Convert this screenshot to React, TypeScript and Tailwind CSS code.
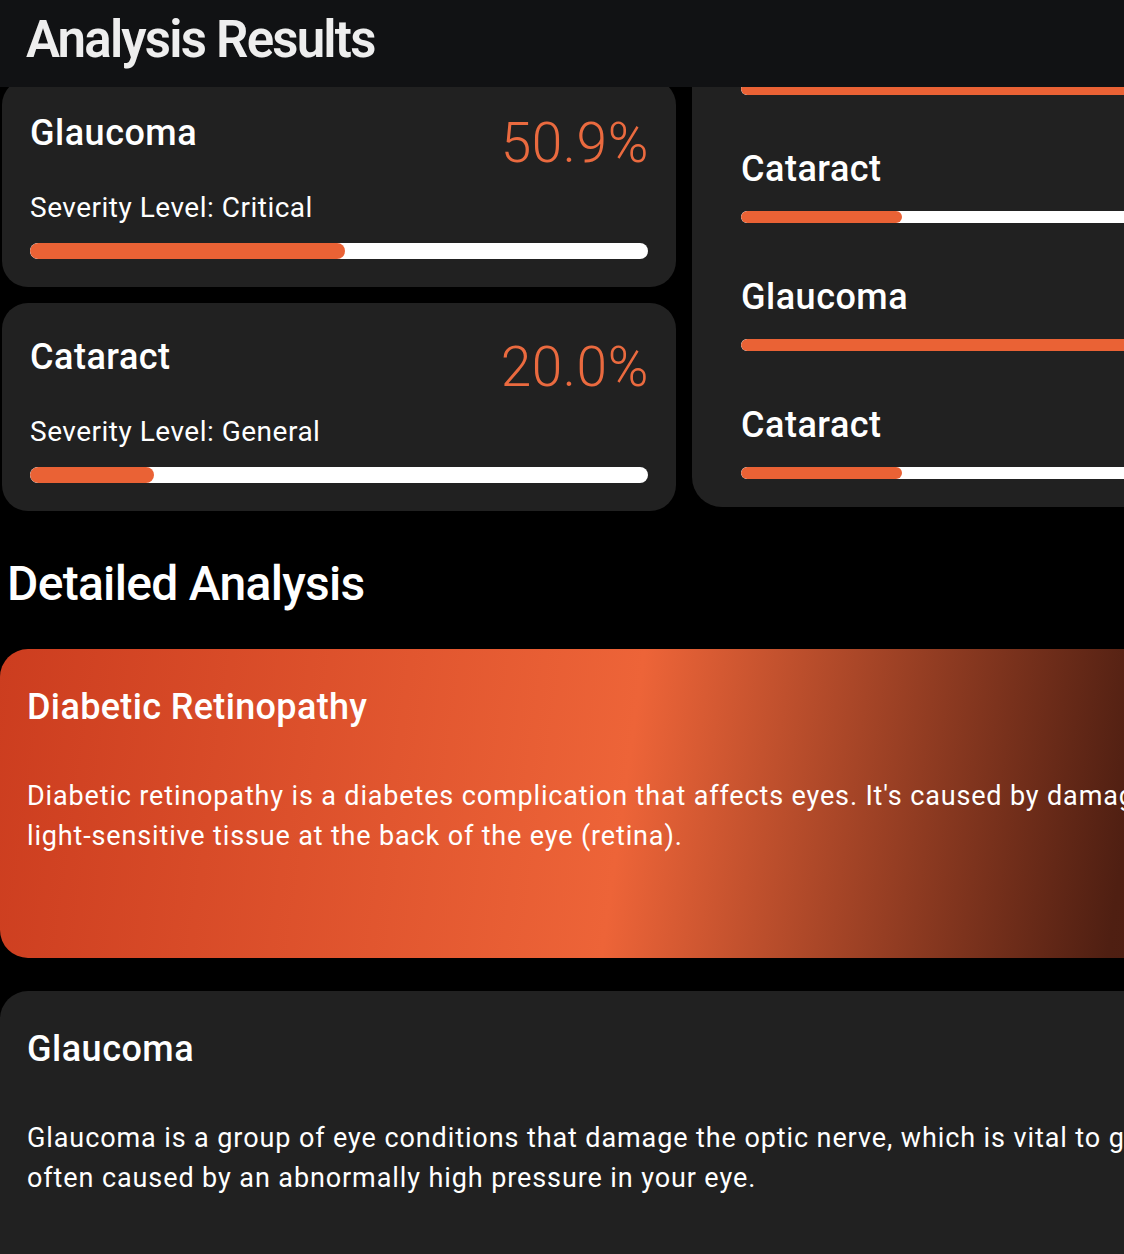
import React from 'react'

type Finding = { name: string; pct: number; level: string }

const findings: Finding[] = [
  { name: 'Glaucoma', pct: 50.9, level: 'Critical' },
  { name: 'Cataract', pct: 20.0, level: 'General' },
]

const overview = [
  { name: 'Glaucoma', pct: 50.9 },
  { name: 'Cataract', pct: 20.0 },
  { name: 'Glaucoma', pct: 50.9 },
  { name: 'Cataract', pct: 20.0 },
]

function ResultCard({ f }: { f: Finding }) {
  return (
    <div className="bg-[#212121] rounded-[26px] h-[208px] px-[28px] pt-9 flex flex-col">
      <div className="flex items-start justify-between">
        <h3 className="text-[36px] leading-none font-medium tracking-[0.5px] text-white">{f.name}</h3>
        <span className="text-[55px] leading-none font-light tracking-[0.6px] text-[#ea6a3f] mt-[1px] -mr-[1px]">{f.pct.toFixed(1)}%</span>
      </div>
      <p className="text-[28px] leading-none tracking-[0.5px] text-white mt-[23px]">Severity Level: {f.level}</p>
      <div className="mt-[21px] h-[16px] w-full rounded-full bg-white overflow-hidden">
        <div className="h-full rounded-full bg-[#ea6235]" style={{ width: `${f.pct}%` }} />
      </div>
    </div>
  )
}

function OverviewCard() {
  return (
    <div className="bg-[#212121] rounded-[30px] w-[900px] pl-[49px] pt-[29px] pb-[28px] flex flex-col gap-[56px]">
      {overview.map((o, i) => (
        <div key={i} className="flex flex-col">
          <h3 className="text-[36px] leading-none font-medium tracking-[0.5px] text-white">{o.name}</h3>
          <div className="mt-6 h-3 w-[805px] rounded-full bg-white overflow-hidden">
            <div className="h-full rounded-full bg-[#ea6235]" style={{ width: `${o.pct}%` }} />
          </div>
        </div>
      ))}
    </div>
  )
}

export default function App() {
  return (
    <div className="w-[1124px] h-[1254px] overflow-hidden bg-black font-['Roboto',sans-serif] text-white">
      <header className="relative z-10 h-[87px] bg-[#111214] pl-[26px] pt-[9px]">
        <h1 className="text-[51px] leading-[62px] font-semibold tracking-[-1.8px] text-[#eeeeee]">Analysis Results</h1>
      </header>

      <div className="flex items-start gap-4 pl-[2px]">
        <div className="w-[674px] shrink-0 -mt-[8px] flex flex-col gap-4">
          {findings.map(f => (
            <ResultCard key={f.name} f={f} />
          ))}
        </div>
        <div className="shrink-0 -mt-[93px]">
          <OverviewCard />
        </div>
      </div>

      <h2 className="mt-[49px] pl-[7px] text-[48px] leading-none font-medium tracking-[-0.7px] text-white">Detailed Analysis</h2>

      <div className="mt-[41px] flex flex-col gap-[33px]">
        <div className="w-[1700px] h-[309px] rounded-[28px] pl-[27px] pt-[40px] bg-[linear-gradient(98deg,#cc3d1f_0%,#ed6438_37%,#4f1f12_66%,#2e1008_100%)]">
          <h3 className="text-[36px] leading-none font-medium tracking-[0.35px] text-white">Diabetic Retinopathy</h3>
          <p className="mt-[51px] text-[27px] leading-[40px] tracking-[0.85px] text-white whitespace-nowrap">
            Diabetic retinopathy is a diabetes complication that affects eyes. It's caused by damage to the blood vessels of the
            <br />
            light-sensitive tissue at the back of the eye (retina).
          </p>
        </div>
        <div className="w-[1700px] h-[309px] rounded-[28px] pl-[27px] pt-[40px] bg-[#212121]">
          <h3 className="text-[36px] leading-none font-medium tracking-[0.5px] text-white">Glaucoma</h3>
          <p className="mt-[51px] text-[27px] leading-[40px] tracking-[0.9px] text-white whitespace-nowrap">
            Glaucoma is a group of eye conditions that damage the optic nerve, which is vital to good vision. This damage is
            <br />
            often caused by an abnormally high pressure in your eye.
          </p>
        </div>
      </div>
    </div>
  )
}
